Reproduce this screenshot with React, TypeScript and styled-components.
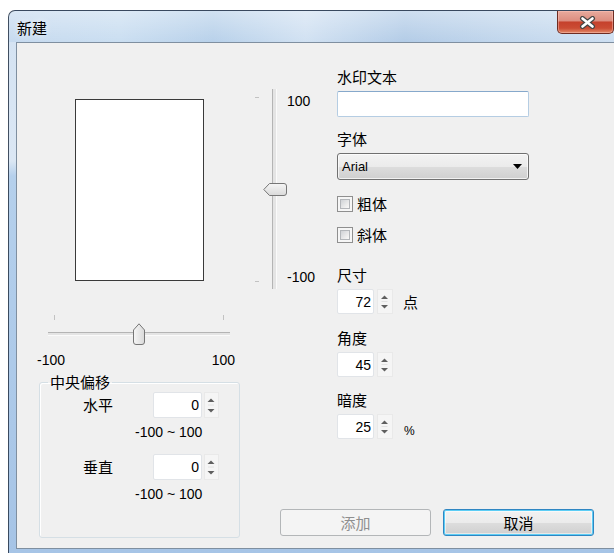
import React from "react";
import styled, { createGlobalStyle } from "styled-components";

const CJK = `"Noto Sans CJK SC", "Liberation Sans", sans-serif`;
const NUM = `"Liberation Sans", Arial, sans-serif`;

const GlobalStyle = createGlobalStyle`
  html, body { margin: 0; padding: 0; background: #ffffff; overflow: hidden; }
  body { font-family: ${NUM}; }
  *, *::before, *::after { box-sizing: border-box; }
`;

const Window = styled.div`
  margin: 10px 0 0 8px;
  width: 620px;
  border: 1px solid rgba(38, 52, 70, 0.85);
  border-radius: 7px 7px 0 0;
  padding: 0 7px 8px;
  display: flex;
  flex-direction: column;
  background:
    linear-gradient(to bottom, rgba(255, 255, 255, 0.35), rgba(255, 255, 255, 0) 31px) 0 0 / 100% 31px no-repeat,
    linear-gradient(90deg, #c6daef 0%, #cadef1 18%, #b8d1ea 33%, #d1e1f2 48%, #b3cce7 64%, #c1d6ec 80%, #cfe0f2 100%) 0 0 / 100% 31px no-repeat,
    linear-gradient(to bottom, #d3e2f2 0px, #dbe7f4 150px, #b5d0ec 165px, #a6c4e6 100%);
`;

const TitleBar = styled.div`
  height: 31px;
  display: flex;
  align-items: flex-start;
  justify-content: space-between;
`;

const Title = styled.div`
  margin-top: 8px;
  padding-left: 1px;
  font-family: ${CJK};
  font-size: 15px;
  line-height: 18px;
  color: #000;
  text-shadow: 0 0 6px rgba(255, 255, 255, 0.9);
`;

const CloseButton = styled.div`
  width: 57px;
  height: 23px;
  margin-right: 6px;
  border: 1px solid #6e2c22;
  border-top: none;
  border-radius: 0 0 5px 5px;
  background: linear-gradient(to bottom, #e8aa9d 0%, #dc8d7f 45%, #c5412c 50%, #cb4c34 78%, #e28a68 100%);
  box-shadow: inset 0 0 0 1px rgba(255, 200, 190, 0.45);
  display: flex;
  align-items: center;
  justify-content: center;
  padding-left: 3px;
`;

const Client = styled.div`
  height: 507px;
  border: 1px solid #7f8fa0;
  background: #f0f0f0;
  display: flex;
`;

/* ---------- left column ---------- */

const LeftCol = styled.div`
  width: 238px;
  flex: none;
  display: flex;
  flex-direction: column;
  align-items: flex-start;
`;

const Preview = styled.div`
  margin: 56px 0 0 58px;
  width: 129px;
  height: 182px;
  background: #ffffff;
  border: 1px solid #3a3a3a;
`;

const HSlider = styled.div`
  position: relative;
  margin: 34px 0 0 31px;
  width: 182px;
  height: 30px;
`;

const HTicks = styled.div`
  display: flex;
  justify-content: space-between;
  padding: 0 6px;
  height: 5px;
  & > span {
    width: 1px;
    height: 5px;
    background: #c2c2c2;
  }
`;

const HTrack = styled.div`
  margin-top: 12px;
  height: 4px;
  border-top: 1px solid #b4b4b4;
  border-bottom: 1px solid #fafafa;
  background: #e4e4e4;
`;

const HThumb = styled.svg`
  position: absolute;
  left: 85px;
  top: 8px;
`;

const RangeLabels = styled.div`
  margin: 7px 0 0 20px;
  width: 198px;
  display: flex;
  justify-content: space-between;
  font-family: ${NUM};
  font-size: 14px;
  line-height: 16px;
  color: #000;
`;

const GroupBox = styled.fieldset`
  margin: 5px 0 0 22px;
  width: 201px;
  height: 165px;
  padding: 0;
  border: 1px solid #d5dfe5;
  border-radius: 3px;
  box-shadow: inset 1px 1px 0 #ffffff;
  display: flex;
  flex-direction: column;
  align-items: flex-start;
`;

const Legend = styled.legend`
  margin-left: 8px;
  padding: 0 2px;
  font-family: ${CJK};
  font-size: 15px;
  line-height: 18px;
  color: #000;
`;

const OffsetRow = styled.div<{ $top: number }>`
  margin: ${(p) => p.$top}px 0 0 43px;
  display: grid;
  grid-template-columns: 70px 49px 2px 15px;
  align-items: center;
`;

const Label = styled.div<{ $top?: number }>`
  margin-top: ${(p) => p.$top ?? 0}px;
  font-family: ${CJK};
  font-size: 15px;
  line-height: 18px;
  color: #000;
  white-space: nowrap;
`;

const RangeHint = styled.div`
  margin: 6px 0 0 95px;
  font-family: ${NUM};
  font-size: 14px;
  line-height: 16px;
  color: #000;
  white-space: nowrap;
`;

/* ---------- right part ---------- */

const RightPart = styled.div`
  flex: 1;
  display: flex;
  flex-direction: column;
`;

const TopRow = styled.div`
  display: flex;
  align-items: flex-start;
`;

const VSlider = styled.div`
  position: relative;
  flex: none;
  display: flex;
  width: 82px;
  height: 200px;
  margin-top: 46px;
`;

const VTicks = styled.div`
  width: 4px;
  display: flex;
  flex-direction: column;
  justify-content: space-between;
  padding: 8px 0 7px;
  & > span {
    height: 1px;
    background: #c2c2c2;
  }
`;

const VTrack = styled.div`
  margin-left: 13px;
  width: 5px;
  height: 100%;
  border-left: 1px solid #b4b4b4;
  border-right: 1px solid #fafafa;
  background: #e4e4e4;
`;

const VLabels = styled.div`
  margin-left: 10px;
  padding: 4px 0;
  display: flex;
  flex-direction: column;
  justify-content: space-between;
  font-family: ${NUM};
  font-size: 14px;
  line-height: 16px;
  color: #000;
`;

const VThumb = styled.svg`
  position: absolute;
  left: 8px;
  top: 94px;
`;

const FormCol = styled.div`
  width: 192px;
  display: flex;
  flex-direction: column;
`;

const TextInput = styled.input`
  margin-top: 5px;
  width: 192px;
  height: 26px;
  border: 1px solid #b5cde3;
  border-top-color: #86a8cb;
  border-radius: 2px;
  background: #ffffff;
  outline: none;
  padding: 0 4px;
  font-family: ${NUM};
  font-size: 13px;
`;

const Select = styled.div`
  margin-top: 5px;
  height: 27px;
  border: 1px solid #707070;
  border-radius: 3px;
  background: linear-gradient(to bottom, #f3f3f3 0%, #ebebeb 50%, #dddddd 51%, #cfcfcf 100%);
  box-shadow: inset 0 0 0 1px rgba(255, 255, 255, 0.7);
  display: flex;
  align-items: center;
  justify-content: space-between;
  padding: 0 6px 0 4px;
  font-family: ${NUM};
  font-size: 13px;
  color: #000;
`;

const CheckRow = styled.label<{ $top: number }>`
  margin-top: ${(p) => p.$top}px;
  height: 18px;
  display: flex;
  align-items: center;
  gap: 4px;
  font-family: ${CJK};
  font-size: 15px;
  line-height: 18px;
  color: #000;
`;

const CheckBox = styled.span`
  position: relative;
  width: 16px;
  height: 16px;
  border: 1px solid #8f8f8f;
  background: #f6f6f6;
  &::after {
    content: "";
    position: absolute;
    inset: 2px;
    border: 1px solid #b3b6ba;
    background: linear-gradient(135deg, #cfd2d6 0%, #eeeeee 70%, #f8f8f8 100%);
  }
`;

const SpinRow = styled.div<{ $indent?: number }>`
  margin-top: 5px;
  display: flex;
  align-items: center;
`;

const SpinInput = styled.input<{ $w: number; $h: number }>`
  width: ${(p) => p.$w}px;
  height: ${(p) => p.$h}px;
  border: 1px solid #e1e4e8;
  border-radius: 2px;
  background: #ffffff;
  outline: none;
  padding: 0 2px 0 0;
  text-align: right;
  font-family: ${NUM};
  font-size: 14px;
  color: #000;
`;

const Spinner = styled.div<{ $gap: number; $w: number; $h: number }>`
  margin-left: ${(p) => p.$gap}px;
  width: ${(p) => p.$w}px;
  height: ${(p) => p.$h}px;
  border: 1px solid #e9e9e9;
  background: #f5f5f5;
  display: flex;
  align-items: center;
  justify-content: center;
`;

const Unit = styled.span<{ $pad?: number }>`
  margin-left: 10px;
  padding-top: ${(p) => p.$pad ?? 0}px;
  font-family: ${CJK};
  font-size: 15px;
  line-height: 18px;
  color: #000;
`;

const Percent = styled.span`
  margin-left: 11px;
  padding-top: 8px;
  font-family: ${NUM};
  font-size: 12px;
  line-height: 14px;
  color: #000;
`;

const ButtonRow = styled.div`
  margin-top: auto;
  margin-bottom: 12px;
  padding-right: 25px;
  display: flex;
  justify-content: flex-end;
  gap: 12px;
`;

const Button = styled.div<{ $default?: boolean; $disabled?: boolean }>`
  width: 151px;
  height: 27px;
  border-radius: 3px;
  display: flex;
  align-items: center;
  justify-content: center;
  font-family: ${CJK};
  font-size: 15px;
  line-height: 18px;
  color: ${(p) => (p.$disabled ? "#8f8f8f" : "#000")};
  border: 1px solid ${(p) => (p.$disabled ? "#b3b6b8" : p.$default ? "#2f86c2" : "#707070")};
  background: ${(p) =>
    p.$disabled
      ? "#f4f4f4"
      : "linear-gradient(to bottom, #f2f2f2 0%, #ebebeb 50%, #dddddd 51%, #cfcfcf 100%)"};
  box-shadow: ${(p) =>
    p.$default ? "inset 0 0 0 1px #5ccdf5, inset 0 0 0 2px rgba(255,255,255,0.5)" : "none"};
`;

const SpinArrows: React.FC<{ w: number; h: number }> = ({ w, h }) => {
  const cx = w / 2 - 0.5;
  return (
    <svg width={w} height={h} viewBox={`0 0 ${w} ${h}`}>
      <polygon points={`${cx - 3.5},9 ${cx},5.5 ${cx + 3.5},9`} fill="#5f5f5f" />
      <line x1={cx - 3} x2={cx + 3} y1={h / 2} y2={h / 2} stroke="#e2e2e2" strokeWidth="1" />
      <polygon points={`${cx - 3.5},${h - 8} ${cx},${h - 4.5} ${cx + 3.5},${h - 8}`} fill="#5f5f5f" />
    </svg>
  );
};

const Spin: React.FC<{ value: string; w: number; h: number; spinW: number; gap: number }> = ({
  value,
  w,
  h,
  spinW,
  gap,
}) => (
  <>
    <SpinInput $w={w} $h={h} readOnly defaultValue={value} />
    <Spinner $gap={gap} $w={spinW} $h={h}>
      <SpinArrows w={spinW - 2} h={h - 2} />
    </Spinner>
  </>
);

export default function App() {
  return (
    <>
      <GlobalStyle />
      <Window>
        <TitleBar>
          <Title>新建</Title>
          <CloseButton>
            <svg width="17" height="13" viewBox="0 0 17 13">
              <path d="M3.5 2.5 L13.5 10.5 M13.5 2.5 L3.5 10.5" stroke="#454545" strokeWidth="5" strokeLinecap="round" />
              <path d="M3.5 2.5 L13.5 10.5 M13.5 2.5 L3.5 10.5" stroke="#ffffff" strokeWidth="2.6" strokeLinecap="round" />
            </svg>
          </CloseButton>
        </TitleBar>
        <Client>
          <LeftCol>
            <Preview />
            <HSlider>
              <HTicks>
                <span />
                <span />
              </HTicks>
              <HTrack />
              <HThumb width="12" height="22" viewBox="0 0 12 22">
                <defs>
                  <linearGradient id="ht" x1="0" x2="1" y1="0" y2="0">
                    <stop offset="0" stopColor="#f6f6f6" />
                    <stop offset="1" stopColor="#d9d9d9" />
                  </linearGradient>
                </defs>
                <path
                  d="M0.5 7 L6 0.8 L11.5 7 V19 Q11.5 21.5 9 21.5 H3 Q0.5 21.5 0.5 19 Z"
                  fill="url(#ht)"
                  stroke="#767676"
                />
              </HThumb>
            </HSlider>
            <RangeLabels>
              <span>-100</span>
              <span>100</span>
            </RangeLabels>
            <GroupBox>
              <Legend>中央偏移</Legend>
              <OffsetRow $top={1}>
                <Label>水平</Label>
                <Spin value="0" w={49} h={26} spinW={15} gap={2} />
              </OffsetRow>
              <RangeHint>-100 ~ 100</RangeHint>
              <OffsetRow $top={14}>
                <Label>垂直</Label>
                <Spin value="0" w={49} h={26} spinW={15} gap={2} />
              </OffsetRow>
              <RangeHint>-100 ~ 100</RangeHint>
            </GroupBox>
          </LeftCol>

          <RightPart>
            <TopRow>
              <VSlider>
                <VTicks>
                  <span />
                  <span />
                </VTicks>
                <VTrack />
                <VLabels>
                  <span>100</span>
                  <span>-100</span>
                </VLabels>
                <VThumb width="24" height="13" viewBox="0 0 24 13">
                  <defs>
                    <linearGradient id="vt" x1="0" x2="0" y1="0" y2="1">
                      <stop offset="0" stopColor="#f6f6f6" />
                      <stop offset="1" stopColor="#d9d9d9" />
                    </linearGradient>
                  </defs>
                  <path
                    d="M0.8 6.5 L6.5 0.5 H21 Q23.5 0.5 23.5 3 V10 Q23.5 12.5 21 12.5 H6.5 Z"
                    fill="url(#vt)"
                    stroke="#767676"
                  />
                </VThumb>
              </VSlider>

              <FormCol>
                <Label $top={25}>水印文本</Label>
                <TextInput readOnly defaultValue="" />
                <Label $top={13}>字体</Label>
                <Select>
                  <span>Arial</span>
                  <svg width="9" height="5" viewBox="0 0 9 5">
                    <polygon points="0,0 9,0 4.5,5" fill="#000" />
                  </svg>
                </Select>
                <CheckRow $top={15}>
                  <CheckBox />
                  粗体
                </CheckRow>
                <CheckRow $top={13}>
                  <CheckBox />
                  斜体
                </CheckRow>
                <Label $top={22}>尺寸</Label>
                <SpinRow>
                  <Spin value="72" w={37} h={25} spinW={16} gap={3} />
                  <Unit>点</Unit>
                </SpinRow>
                <Label $top={15}>角度</Label>
                <SpinRow>
                  <Spin value="45" w={37} h={25} spinW={16} gap={3} />
                </SpinRow>
                <Label $top={14}>暗度</Label>
                <SpinRow>
                  <Spin value="25" w={37} h={25} spinW={16} gap={3} />
                  <Percent>%</Percent>
                </SpinRow>
              </FormCol>
            </TopRow>

            <ButtonRow>
              <Button $disabled>添加</Button>
              <Button $default>取消</Button>
            </ButtonRow>
          </RightPart>
        </Client>
      </Window>
    </>
  );
}
